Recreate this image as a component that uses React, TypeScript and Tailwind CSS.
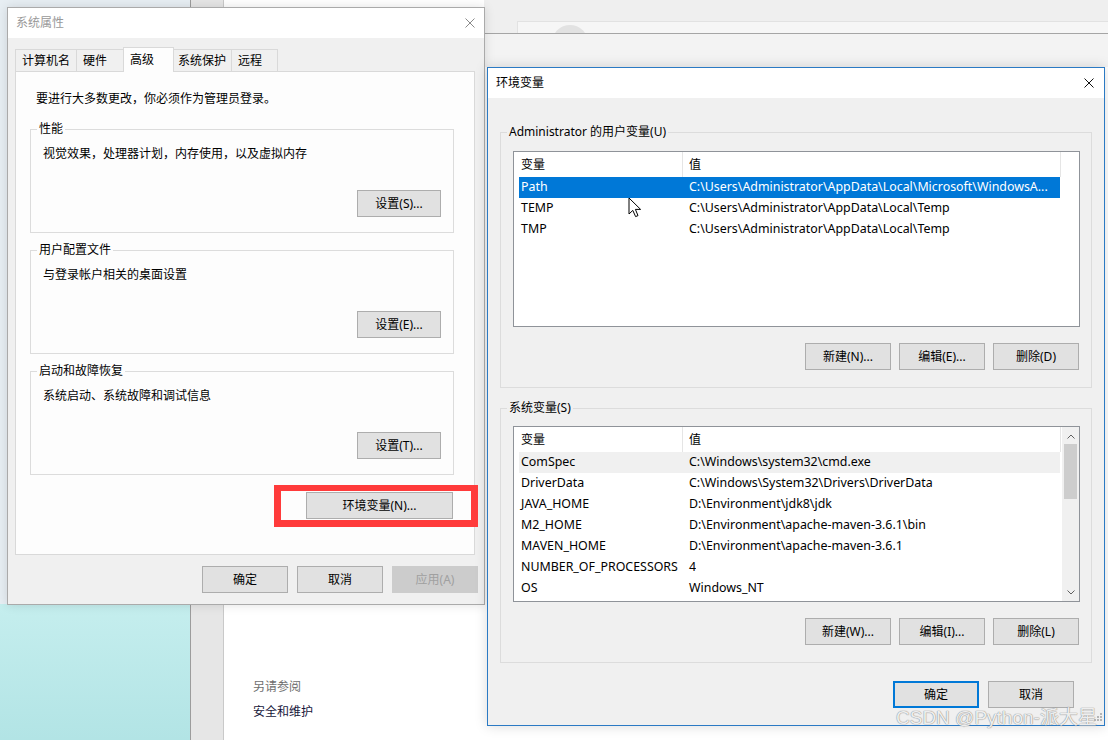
import React from 'react';

type Row = { name: string; value: string };

const userVars: Row[] = [
  { name: 'Path', value: 'C:\\Users\\Administrator\\AppData\\Local\\Microsoft\\WindowsA...' },
  { name: 'TEMP', value: 'C:\\Users\\Administrator\\AppData\\Local\\Temp' },
  { name: 'TMP', value: 'C:\\Users\\Administrator\\AppData\\Local\\Temp' },
];

const sysVars: Row[] = [
  { name: 'ComSpec', value: 'C:\\Windows\\system32\\cmd.exe' },
  { name: 'DriverData', value: 'C:\\Windows\\System32\\Drivers\\DriverData' },
  { name: 'JAVA_HOME', value: 'D:\\Environment\\jdk8\\jdk' },
  { name: 'M2_HOME', value: 'D:\\Environment\\apache-maven-3.6.1\\bin' },
  { name: 'MAVEN_HOME', value: 'D:\\Environment\\apache-maven-3.6.1' },
  { name: 'NUMBER_OF_PROCESSORS', value: '4' },
  { name: 'OS', value: 'Windows_NT' },
];

const CloseIcon = ({ color }: { color: string }) => (
  <svg width="10" height="10" viewBox="0 0 10 10">
    <path d="M0.5 0.5 L9.5 9.5 M9.5 0.5 L0.5 9.5" stroke={color} strokeWidth="1" fill="none" />
  </svg>
);

const Chevron = ({ down }: { down?: boolean }) => (
  <svg width="8" height="5" viewBox="0 0 8 5">
    <path d={down ? 'M0.5 0.5 L4 4 L7.5 0.5' : 'M0.5 4.5 L4 1 L7.5 4.5'} stroke="#606060" strokeWidth="1" fill="none" />
  </svg>
);

const Btn = ({
  children,
  w,
  primary,
  disabled,
}: {
  children: React.ReactNode;
  w: string;
  primary?: boolean;
  disabled?: boolean;
}) => (
  <button
    className={`flex h-[27px] ${w} items-center justify-center ${
      primary
        ? 'border-2 border-[#0078d7] bg-[#e1e1e1] text-black'
        : disabled
        ? 'border border-[#cccccc] bg-[#cccccc] text-[#a0a0a0]'
        : 'border border-[#adadad] bg-[#e1e1e1] text-black'
    } text-[12px] leading-none`}
  >
    {children}
  </button>
);

const SettingsGroup = ({ title, text, button }: { title: string; text: string; button: string }) => (
  <fieldset className="w-[424px] border border-[#dcdcdc]">
    <legend className="ml-[6px] px-[2px] leading-[16px]">{title}</legend>
    <div className="flex flex-col px-[12px] pb-[15px] pt-[9px]">
      <div className="leading-[16px]">{text}</div>
      <div className="mt-[28px] flex justify-end">
        <Btn w="w-[84px]">{button}</Btn>
      </div>
    </div>
  </fieldset>
);

const VarList = ({ rows, selected, hover, scroll }: { rows: Row[]; selected?: number; hover?: number; scroll?: boolean }) => (
  <div className="flex h-[176px] w-[567px] overflow-hidden border border-[#8f9399] bg-white">
    <div className="flex w-[547px] shrink-0 flex-col overflow-hidden">
      <div className="flex h-[25px] shrink-0 items-center">
        <div className="w-[168px] pl-[7px]">变量</div>
        <div className="h-full w-px bg-[#e5e5e5]" />
        <div className="flex-1 pl-[6px]">值</div>
        <div className="h-full w-px bg-[#e5e5e5]" />
      </div>
      {rows.map((r, i) => (
        <div
          key={r.name + i}
          className={`ml-[5px] flex h-[21px] w-[541px] shrink-0 items-center whitespace-nowrap text-[12.4px] ${
            i === selected ? 'bg-[#0078d7] text-white' : i === hover ? 'bg-[#f0f0f0]' : ''
          }`}
        >
          <div className="w-[168px] shrink-0 pl-[2px]">{r.name}</div>
          <div className="overflow-hidden pl-[2px]">{r.value}</div>
        </div>
      ))}
    </div>
    {scroll ? (
      <div className="ml-px flex w-[17px] flex-col bg-[#f0f0f0]">
        <div className="flex h-[17px] items-center justify-center pt-[2px]">
          <Chevron />
        </div>
        <div className="mx-[2px] h-[55px] bg-[#cdcdcd]" />
        <div className="flex-1" />
        <div className="flex h-[17px] items-center justify-center">
          <Chevron down />
        </div>
      </div>
    ) : null}
  </div>
);

const VarGroup = ({
  title,
  rows,
  selected,
  hover,
  scroll,
  buttons,
  gap,
}: {
  title: string;
  rows: Row[];
  selected?: number;
  hover?: number;
  scroll?: boolean;
  buttons: string[];
  gap: string;
}) => (
  <fieldset className="w-[592px] border border-[#dcdcdc]">
    <legend className="ml-[6px] px-[2px] leading-[16px]">{title}</legend>
    <div className={`flex flex-col pb-[17px] pl-[12px] ${gap}`}>
      <VarList rows={rows} selected={selected} hover={hover} scroll={scroll} />
      <div className="mt-[16px] flex justify-end gap-[8px] pr-[12px]">
        {buttons.map((b) => (
          <Btn key={b} w="w-[86px]">
            {b}
          </Btn>
        ))}
      </div>
    </div>
  </fieldset>
);

const tabs = [
  { label: '计算机名', cls: 'w-[61px] h-[22px] border-l border-t pl-[6px] bg-[#f0f0f0]' },
  { label: '硬件', cls: 'w-[47px] h-[22px] border-l border-t pl-[6px] bg-[#f0f0f0]' },
  { label: '高级', cls: 'relative z-10 -mb-px w-[51px] h-[25px] border-x border-t pl-[6px] bg-[#fdfdfd]' },
  { label: '系统保护', cls: 'w-[57px] h-[22px] border-t pl-[4px] bg-[#f0f0f0]' },
  { label: '远程', cls: 'w-[47px] h-[22px] border-x border-t pl-[6px] bg-[#f0f0f0]' },
];

const SystemProperties = () => (
  <div className="absolute left-[7px] top-[7px] flex h-[598px] w-[478px] flex-col border border-[#aaaaaa] bg-[#f0f0f0] shadow-[0_0_10px_rgba(0,0,0,0.12)]">
    <div className="flex h-[30px] shrink-0 items-center justify-between bg-white pl-[8px] pr-[9px] text-[#999999]">
      <span>系统属性</span>
      <CloseIcon color="#8a8a8a" />
    </div>
    <div className="flex flex-1 flex-col px-[7px]">
      <div className="mt-[9px] flex h-[24px] items-end">
        {tabs.map((t) => (
          <div key={t.label} className={`flex items-center border-[#d9d9d9] ${t.cls}`}>
            {t.label}
          </div>
        ))}
      </div>
      <div className="flex h-[484px] w-[460px] flex-col border border-[#d9d9d9] bg-[#fdfdfd] pl-[14px] pt-[19px]">
        <div className="pl-[6px] leading-[16px]">要进行大多数更改，你必须作为管理员登录。</div>
        <div className="mt-[14px] flex flex-col gap-[9px]">
          <SettingsGroup title="性能" text="视觉效果，处理器计划，内存使用，以及虚拟内存" button="设置(S)..." />
          <SettingsGroup title="用户配置文件" text="与登录帐户相关的桌面设置" button="设置(E)..." />
          <SettingsGroup title="启动和故障恢复" text="系统启动、系统故障和调试信息" button="设置(T)..." />
        </div>
        <div className="mt-[17px] flex w-[423px] justify-end">
          <Btn w="w-[147px]">环境变量(N)...</Btn>
        </div>
      </div>
      <div className="-mr-px mt-[11px] flex justify-end gap-[9px]">
        <Btn w="w-[86px]">确定</Btn>
        <Btn w="w-[86px]">取消</Btn>
        <Btn w="w-[86px]" disabled>
          应用(A)
        </Btn>
      </div>
    </div>
  </div>
);

const EnvVariables = () => (
  <div className="absolute left-[487px] top-[67px] flex h-[659px] w-[618px] flex-col border border-[#2b7ac4] bg-[#f0f0f0] shadow-[0_0_12px_rgba(0,0,0,0.15)]">
    <div className="flex h-[30px] shrink-0 items-center justify-between bg-white pl-[8px] pr-[10px]">
      <span>环境变量</span>
      <CloseIcon color="#111111" />
    </div>
    <div className="flex flex-1 flex-col pl-[12px] pt-[26px]">
      <VarGroup
        title="Administrator 的用户变量(U)"
        rows={userVars}
        selected={0}
        buttons={['新建(N)...', '编辑(E)...', '删除(D)']}
        gap="pt-[11px]"
      />
      <div className="mt-[12px]">
        <VarGroup
          title="系统变量(S)"
          rows={sysVars}
          hover={0}
          scroll
          buttons={['新建(W)...', '编辑(I)...', '删除(L)']}
          gap="pt-[10px]"
        />
      </div>
      <div className="mt-[18px] flex justify-end gap-[9px] pr-[30px]">
        <Btn w="w-[86px]" primary>
          确定
        </Btn>
        <Btn w="w-[86px]">取消</Btn>
      </div>
    </div>
  </div>
);

export default function App() {
  return (
    <div className="relative h-[740px] w-[1108px] overflow-hidden bg-white font-['Noto_Sans','Noto_Sans_CJK_SC',sans-serif] text-[12px] text-black">
      {/* desktop */}
      <div className="absolute inset-y-0 left-0 flex w-[190px] flex-col">
        <div className="h-[604px] bg-[#e7eef3]" />
        <div className="flex-1 bg-linear-to-b from-[#c5eeee] to-[#b2e4e5]" />
      </div>

      {/* control panel behind */}
      <div className="absolute inset-y-0 left-[190px] right-0 flex border-l border-[#9c9c9c]">
        <div className="w-[33px] border-r border-[#c9c9c9] bg-[#e6e6e6]" />
        <div className="flex flex-1 flex-col justify-end gap-[9px] bg-white pb-[20px] pl-[29px] leading-[16px]">
          <div className="text-[#6e6e6e]">另请参阅</div>
          <div className="text-[#16163a]">安全和维护</div>
        </div>
      </div>

      {/* faded window header at the top right */}
      <div className="absolute left-[484px] right-0 top-0 flex h-[67px] flex-col bg-[#f3f3f3]">
        <div className="h-[34px] overflow-hidden border-b border-[#a5a5a5] bg-[#efefef] pl-[33px] pt-[21px]">
          <div className="h-full border-l border-t border-[#e2e2e2] bg-[#f6f6f6] pl-[34px] pt-[3px]">
            <div className="h-[36px] w-[36px] rounded-full bg-[#e2e2e2]" />
          </div>
        </div>
      </div>

      <SystemProperties />
      <EnvVariables />

      {/* red highlight */}
      <div className="absolute left-[274px] top-[485px] h-[42px] w-[204px] border-[7px] border-t-[6px] border-[#ff3b3b]" />

      {/* mouse cursor */}
      <svg className="absolute left-[628px] top-[197px]" width="14" height="21" viewBox="0 0 14 21">
        <path d="M1 1 V17 L4.8 13.4 L7.6 19.6 L10 18.6 L7.4 12.4 H12.6 Z" fill="white" stroke="black" strokeWidth="1" strokeLinejoin="round" />
      </svg>

      {/* size grip */}
      <svg className="absolute left-[1094px] top-[713px]" width="9" height="9" viewBox="0 0 9 9">
        <rect x="6" y="0" width="2" height="2" fill="#b5b5b5" />
        <rect x="3" y="3" width="2" height="2" fill="#b5b5b5" />
        <rect x="6" y="3" width="2" height="2" fill="#b5b5b5" />
        <rect x="0" y="6" width="2" height="2" fill="#b5b5b5" />
        <rect x="3" y="6" width="2" height="2" fill="#b5b5b5" />
        <rect x="6" y="6" width="2" height="2" fill="#b5b5b5" />
      </svg>

      {/* watermark */}
      <div className="absolute left-[896px] top-[707px] whitespace-nowrap font-['Liberation_Sans','Noto_Sans_CJK_SC',sans-serif] text-[19px] leading-[22px] text-[rgba(252,252,252,0.9)] [text-shadow:0_0_1px_#8a8a8a,0_0_1px_#8a8a8a]">
        CSDN @Python-派大星
      </div>
    </div>
  );
}
